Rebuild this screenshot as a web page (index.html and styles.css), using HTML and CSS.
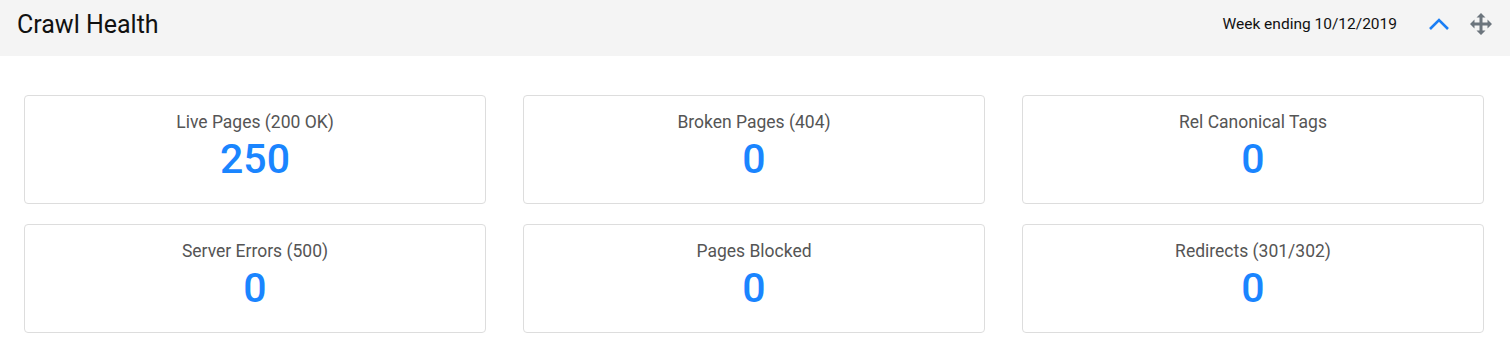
FILE: index.html
```html
<!DOCTYPE html>
<html>
<head>
  <meta charset="UTF-8">
  <title>Crawl Health</title>
  <link rel="stylesheet" href="styles.css">
</head>
<body>
  <div class="panel">
    <div class="panel-header">
      <h2>Crawl Health</h2>
      <div class="header-tools">
        <span class="week">Week ending 10/12/2019</span>
        <svg class="chevron" width="22" height="14" viewBox="0 0 22 14">
          <path d="M2 12 L11 3 L20 12" fill="none" stroke="#1a7ef5" stroke-width="2.6"/>
        </svg>
        <svg class="move" width="24" height="24" viewBox="0 0 24 24">
          <path fill="#6c757d" d="M12 1 L16.5 5.5 H13.5 V10.5 H18.5 V7.5 L23 12 L18.5 16.5 V13.5 H13.5 V18.5 H16.5 L12 23 L7.5 18.5 H10.5 V13.5 H5.5 V16.5 L1 12 L5.5 7.5 V10.5 H10.5 V5.5 H7.5 Z"/>
        </svg>
      </div>
    </div>
    <div class="stats">
      <div class="stat">
        <div class="stat-label">Live Pages (200 OK)</div>
        <div class="stat-value">250</div>
      </div>
      <div class="stat">
        <div class="stat-label">Broken Pages (404)</div>
        <div class="stat-value">0</div>
      </div>
      <div class="stat">
        <div class="stat-label">Rel Canonical Tags</div>
        <div class="stat-value">0</div>
      </div>
      <div class="stat">
        <div class="stat-label">Server Errors (500)</div>
        <div class="stat-value">0</div>
      </div>
      <div class="stat">
        <div class="stat-label">Pages Blocked</div>
        <div class="stat-value">0</div>
      </div>
      <div class="stat">
        <div class="stat-label">Redirects (301/302)</div>
        <div class="stat-value">0</div>
      </div>
    </div>
  </div>
</body>
</html>
```

FILE: styles.css
```css
body {
  margin: 0;
  font-family: Roboto, "Liberation Sans", sans-serif;
  background-color: #fff;
  color: #111;
}
.panel-header {
  display: flex;
  align-items: center;
  justify-content: space-between;
  height: 48px;
  padding: 0 17px 8px;
  background-color: #f4f4f4;
}
.panel-header h2 {
  margin: 0;
  font-size: 25px;
  font-weight: 400;
  color: #111;
}
.header-tools {
  display: flex;
  align-items: center;
}
.week {
  font-size: 15.5px;
  color: #111;
  margin-right: 31px;
}
.chevron {
  margin-right: 19px;
}
.stats {
  display: grid;
  grid-template-columns: repeat(3, 462px);
  column-gap: 37px;
  row-gap: 20px;
  padding: 39px 24px 0;
}
.stat {
  height: 107px;
  border: 1px solid #ddd;
  border-radius: 4px;
  text-align: center;
}
.stat-label {
  margin-top: 14px;
  font-size: 17.5px;
  line-height: 24px;
  color: #555;
}
.stat-value {
  margin-top: 1px;
  font-size: 41px;
  line-height: 48px;
  font-weight: 500;
  color: #1a85ff;
}
```
